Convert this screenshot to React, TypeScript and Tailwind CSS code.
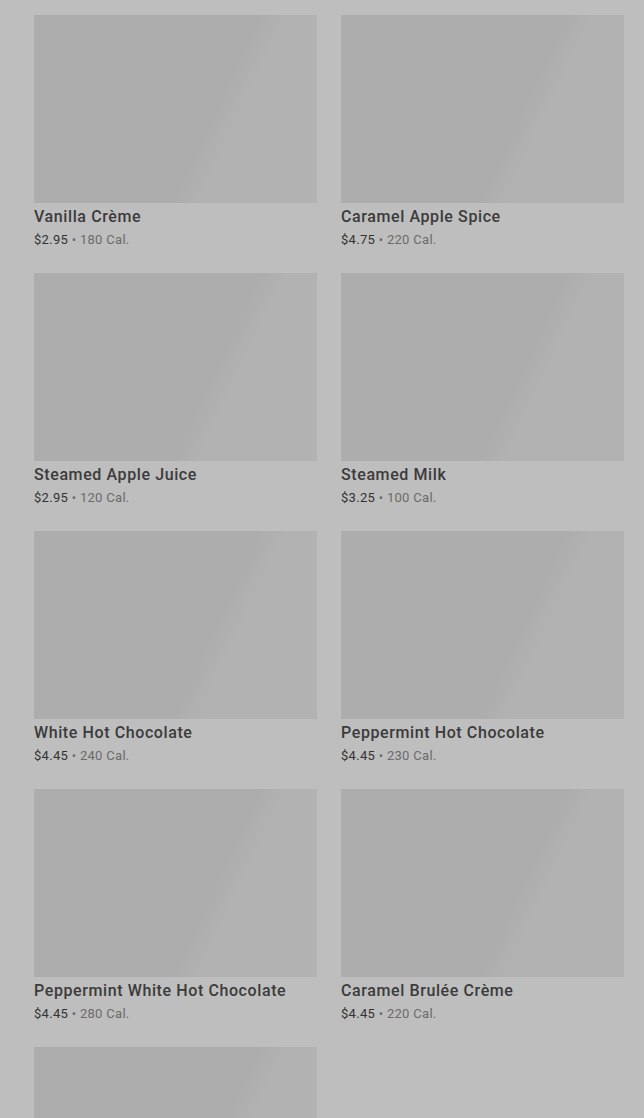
import React from "react";

type Drink = {
  name: string;
  price: string;
  cal: string;
};

const drinks: Drink[] = [
  { name: "Vanilla Crème", price: "$2.95", cal: "180 Cal." },
  { name: "Caramel Apple Spice", price: "$4.75", cal: "220 Cal." },
  { name: "Steamed Apple Juice", price: "$2.95", cal: "120 Cal." },
  { name: "Steamed Milk", price: "$3.25", cal: "100 Cal." },
  { name: "White Hot Chocolate", price: "$4.45", cal: "240 Cal." },
  { name: "Peppermint Hot Chocolate", price: "$4.45", cal: "230 Cal." },
  { name: "Peppermint White Hot Chocolate", price: "$4.45", cal: "280 Cal." },
  { name: "Caramel Brulée Crème", price: "$4.45", cal: "220 Cal." },
  { name: "", price: "", cal: "" },
];

const DrinkCard: React.FC<{ drink: Drink }> = ({ drink }) => {
  return (
    <div className="flex flex-col">
      {/* image placeholder (loading shimmer) */}
      <div className="h-[188px] w-full bg-[linear-gradient(115deg,#adadad_61%,#b2b2b2_68%,#b2b2b2_100%)]" />
      {drink.name && (
        <>
          <div className="mt-1 text-[16px] leading-5 font-medium tracking-[0.6px] text-[#3b3b3b] whitespace-nowrap">
            {drink.name}
          </div>
          <div className="mt-1 text-[13px] leading-[18px] tracking-[0.3px] whitespace-nowrap">
            <span className="text-[#333333]">{drink.price}</span>
            <span className="text-[#6b6b6b]"> • {drink.cal}</span>
          </div>
        </>
      )}
    </div>
  );
};

export default function App() {
  return (
    <div className="h-[1118px] w-full bg-[#bebebe] font-['Roboto',sans-serif] overflow-hidden">
      <div className="grid grid-cols-2 gap-x-6 gap-y-6 pl-[34px] pr-[20px] pt-[15px]">
        {drinks.map((d, i) => (
          <DrinkCard key={i} drink={d} />
        ))}
      </div>
    </div>
  );
}
